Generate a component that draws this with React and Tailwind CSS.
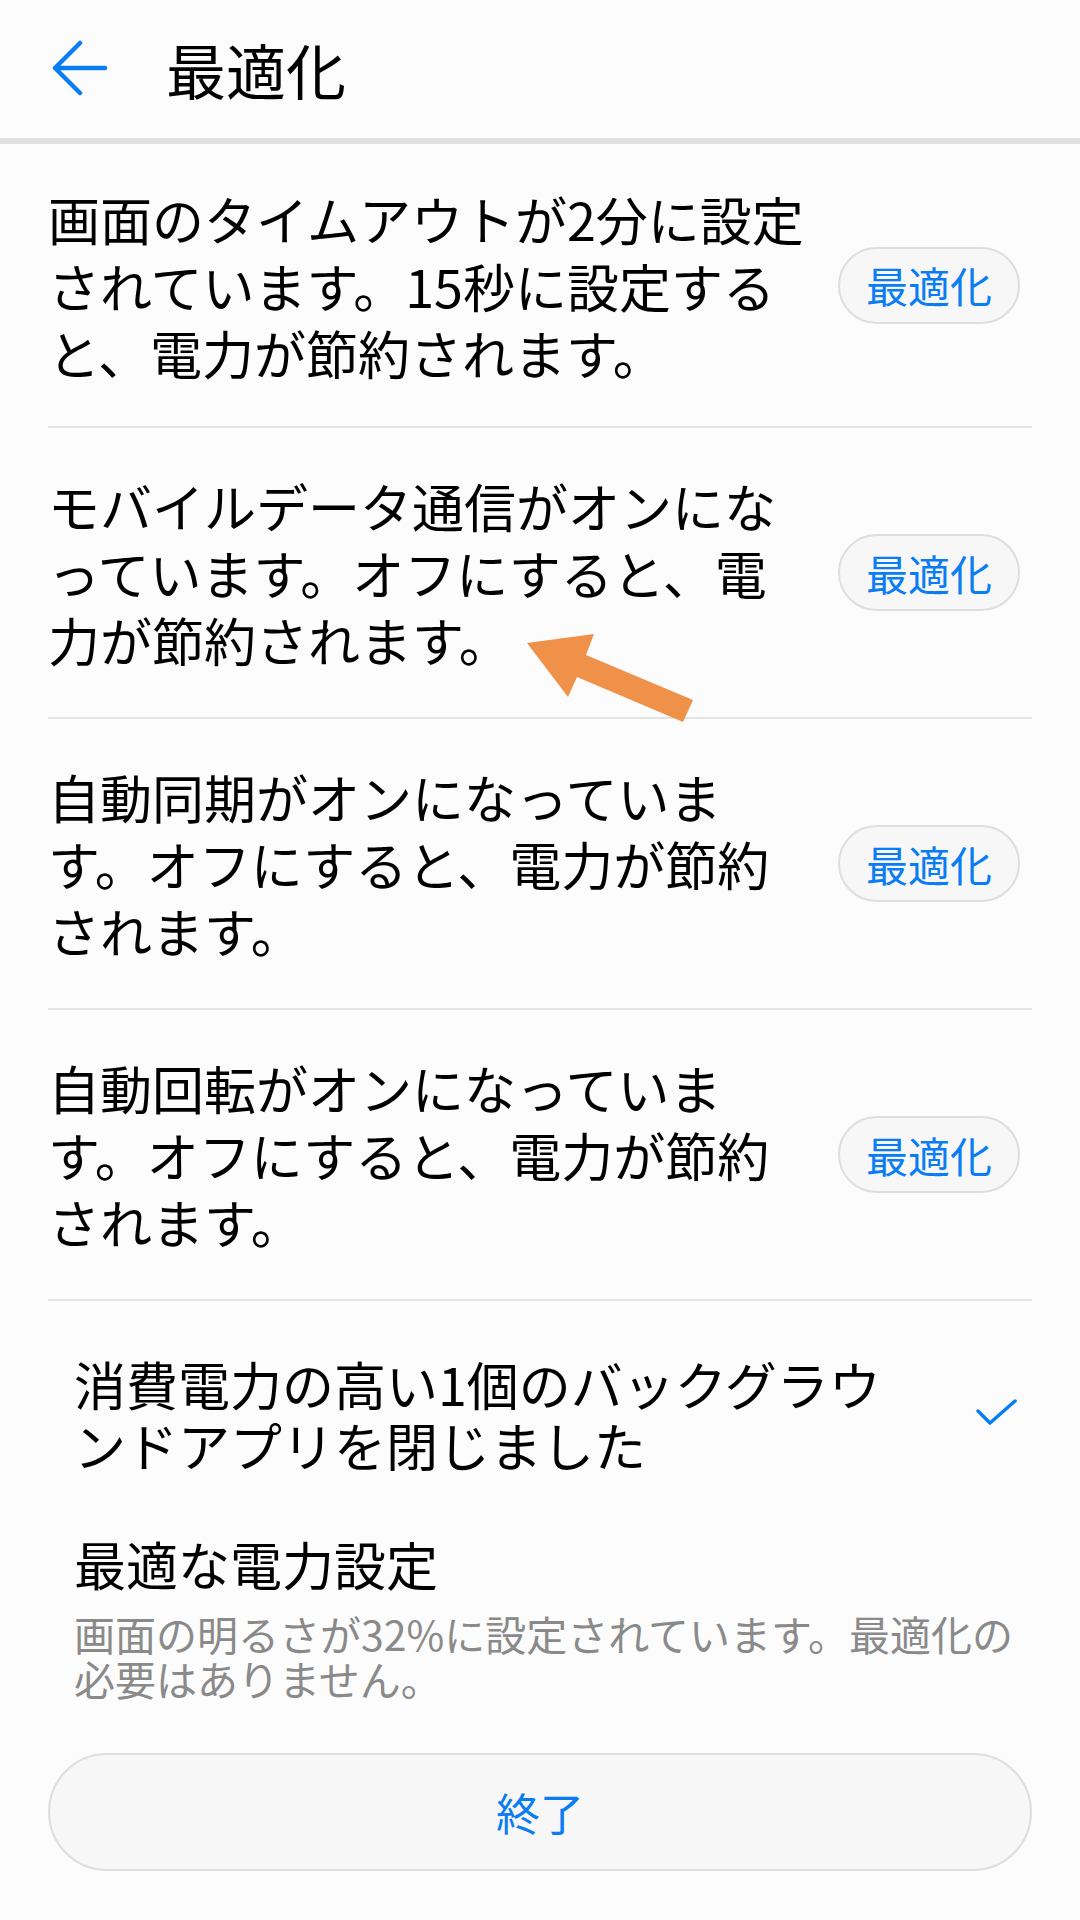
import React from "react";

const rows = [
  {
    lines: ["画面のタイムアウトが2分に設定", "されています。15秒に設定する", "と、電力が節約されます。"],
    first: true,
  },
  { lines: ["モバイルデータ通信がオンにな", "っています。オフにすると、電", "力が節約されます。"] },
  { lines: ["自動同期がオンになっていま", "す。オフにすると、電力が節約", "されます。"] },
  { lines: ["自動回転がオンになっていま", "す。オフにすると、電力が節約", "されます。"] },
];

function BackArrow() {
  return (
    <svg width="56" height="58" viewBox="0 0 56 58" fill="none">
      <path
        d="M53 28H3M28 3L3 28L28 53"
        stroke="#0a7df5"
        strokeWidth="4.5"
        strokeLinecap="round"
        strokeLinejoin="round"
      />
    </svg>
  );
}

function OptimizeRow({ lines, first }) {
  return (
    <div
      className={
        "flex items-center justify-between border-b-2 border-[#e3e3e3] " +
        (first ? "h-[284px]" : "h-[291px]")
      }
    >
      <div className="text-[52px] leading-[67px] text-black">
        {lines.map((l) => (
          <div key={l} className="whitespace-nowrap">
            {l}
          </div>
        ))}
      </div>
      <button className="mr-[12px] flex h-[77px] w-[182px] items-center justify-center rounded-full border-2 border-[#dedede] bg-[#f7f7f7] text-[42px] leading-none text-[#0a7df5]">
        最適化
      </button>
    </div>
  );
}

export default function App() {
  return (
    <div className="relative flex h-[1920px] w-[1080px] flex-col overflow-hidden bg-[#fcfcfc] font-['Noto_Sans_CJK_JP',sans-serif]">
      <header className="flex h-[144px] items-center border-b-[6px] border-[#e0e0e0] pl-[52px]">
        <BackArrow />
        <h1 className="ml-[58px] text-[60px] leading-none text-black">最適化</h1>
      </header>

      <div className="px-[48px]">
        {rows.map((r, i) => (
          <OptimizeRow key={i} {...r} />
        ))}
      </div>

      <div className="flex items-center justify-between pl-[74px] pr-[62px] pt-[52px]">
        <div className="text-[52px] leading-[61px] text-black">
          <div className="whitespace-nowrap">消費電力の高い1個のバックグラウ</div>
          <div className="whitespace-nowrap">ンドアプリを閉じました</div>
        </div>
        <svg width="42" height="30" viewBox="0 0 42 30" fill="none">
          <path d="M2 12L14 24L39 2" stroke="#0a7df5" strokeWidth="3.5" strokeLinecap="round" strokeLinejoin="round" />
        </svg>
      </div>

      <div className="px-[74px] pt-[58px]">
        <div className="text-[52px] leading-[61px] text-black">最適な電力設定</div>
        <div className="mt-[17px] text-[41px] leading-[45px] text-[#8a8a8a]">
          <div className="whitespace-nowrap">画面の明るさが32%に設定されています。最適化の</div>
          <div className="whitespace-nowrap">必要はありません。</div>
        </div>
      </div>

      <div className="px-[48px] pt-[52px]">
        <button className="flex h-[118px] w-full items-center justify-center rounded-full border-2 border-[#dedede] bg-[#f7f7f7] text-[44px] leading-none text-[#0a7df5]">
          終了
        </button>
      </div>

      <svg
        className="absolute left-[520px] top-[625px]"
        width="180"
        height="105"
        viewBox="0 0 180 105"
      >
        <polygon
          points="7,18 74,9 66,30 173,75 163,97 57,52 48,72"
          fill="#f0914a"
        />
      </svg>
    </div>
  );
}
